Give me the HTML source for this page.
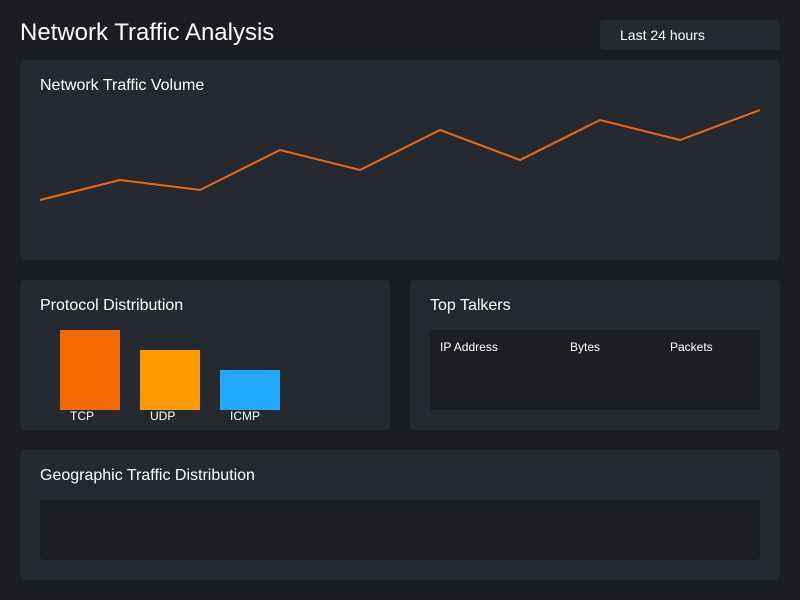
<!DOCTYPE html>
<html><head><meta charset="utf-8"><style>
body{margin:0;width:800px;height:600px;background:#1b1d21;font-family:"Liberation Sans",sans-serif;color:#fff;position:relative;overflow:hidden}
.a{position:absolute}
.p{position:absolute;background:#252930;border-radius:4px}
.t{position:absolute;font-size:16px;left:20px;top:17px}
</style></head><body>
<div class="a" style="left:20px;top:19px;font-size:24px">Network Traffic Analysis</div>
<div class="a" style="left:600px;top:20px;width:180px;height:30px;background:#252930;border-radius:4px;font-size:14px;line-height:30px;padding-left:20px;box-sizing:border-box">Last 24 hours</div>
<div class="p" style="left:20px;top:60px;width:760px;height:200px"><div class="t">Network Traffic Volume</div></div>
<svg class="a" style="left:0;top:0" width="800" height="260"><polyline fill="none" stroke="#f06a0a" stroke-width="2" points="40,200 120,180 200,190 280,150 360,170 440,130 520,160 600,120 680,140 760,110"/></svg>
<div class="p" style="left:20px;top:280px;width:370px;height:150px"><div class="t">Protocol Distribution</div>
<div class="a" style="left:40px;top:50px;width:60px;height:80px;background:#f26a00"></div>
<div class="a" style="left:120px;top:70px;width:60px;height:60px;background:#ff9900"></div>
<div class="a" style="left:200px;top:90px;width:60px;height:40px;background:#21a8ff"></div>
<div class="a" style="left:50px;top:129px;font-size:12px">TCP</div>
<div class="a" style="left:130px;top:129px;font-size:12px">UDP</div>
<div class="a" style="left:210px;top:129px;font-size:12px">ICMP</div>
</div>
<div class="p" style="left:410px;top:280px;width:370px;height:150px"><div class="t">Top Talkers</div>
<div class="a" style="left:20px;top:50px;width:330px;height:80px;background:#1c1e22;font-size:12px">
<span class="a" style="left:10px;top:10px">IP Address</span><span class="a" style="left:140px;top:10px">Bytes</span><span class="a" style="left:240px;top:10px">Packets</span></div>
</div>
<div class="p" style="left:20px;top:450px;width:760px;height:130px"><div class="t">Geographic Traffic Distribution</div>
<div class="a" style="left:20px;top:50px;width:720px;height:60px;background:#1c1e22;border-radius:4px"></div></div>
</body></html>
